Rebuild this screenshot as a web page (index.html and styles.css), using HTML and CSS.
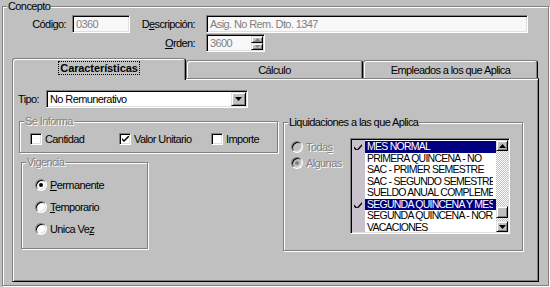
FILE: index.html
```html
<!DOCTYPE html>
<html lang="es">
<head>
    <meta charset="UTF-8">
    <title>Concepto</title>
    <link rel="stylesheet" href="styles.css">
</head>
<body>
    <fieldset class="group concepto">
        <legend>Concepto</legend>

        <div class="header-grid">
            <span class="lbl lbl-codigo">Códi<u>g</u>o:</span>
            <div class="field disabled">0360</div>
            <span class="lbl lbl-desc">D<u>e</u>scripción:</span>
            <div class="field disabled">Asig. No Rem. Dto. 1347</div>
            <span class="lbl lbl-orden"><u>O</u>rden:</span>
            <div class="field disabled spin">
                <span class="spin-value">3600</span>
                <span class="spin-btns">
                    <span class="btn spin-btn"><svg width="5" height="3"><path d="M0 3h5L2.5 0z" fill="#808080"/></svg></span>
                    <span class="btn spin-btn"><svg width="5" height="3"><path d="M0 0h5L2.5 3z" fill="#808080"/></svg></span>
                </span>
            </div>
        </div>

        <div class="tabs">
            <div class="tab-strip">
                <div class="tab tab-active"><span class="focus">Características</span></div>
                <div class="tab tab-calc">Cálculo</div>
                <div class="tab tab-emp">Empleados a los que Aplica</div>
            </div>

            <div class="tab-panel">
                <div class="tipo-row">
                    <span class="lbl-tipo">Tipo:</span>
                    <div class="field combo">
                        <span class="combo-text">No Remunerativo</span>
                        <span class="btn combo-btn"><svg width="7" height="4"><path d="M0 0h7L3.5 4z"/></svg></span>
                    </div>
                </div>

                <div class="panel-body">
                    <div class="left-col">
                        <fieldset class="group se-informa">
                            <legend class="disabled-text">Se Informa</legend>
                            <div class="check-row">
                                <label class="check check-cant"><span class="box"></span><span>Cantidad</span></label>
                                <label class="check check-valor"><span class="box"><svg width="7" height="7"><path d="M0 2l2 2 5-5v2l-5 5-2-2z"/></svg></span><span>Valor Unitario</span></label>
                                <label class="check"><span class="box"></span><span>Importe</span></label>
                            </div>
                        </fieldset>

                        <fieldset class="group vigencia">
                            <legend class="disabled-text">Vigencia</legend>
                            <div class="radio-list">
                                <label class="radio"><span class="dot on"></span><span><u>P</u>ermanente</span></label>
                                <label class="radio"><span class="dot"></span><span><u>T</u>emporario</span></label>
                                <label class="radio"><span class="dot"></span><span>Unica Ve<u>z</u></span></label>
                            </div>
                        </fieldset>
                    </div>

                    <fieldset class="group liquid">
                        <legend>Liquidaciones a las que Aplica</legend>
                        <div class="liquid-body">
                            <div class="liquid-radios">
                                <label class="radio disabled-text"><span class="dot off"></span><span>Toda<u>s</u></span></label>
                                <label class="radio disabled-text"><span class="dot off on"></span><span>Algunas</span></label>
                            </div>

                            <div class="listbox">
                                <div class="list-items">
                                    <div class="item sel"><span class="mark"><svg width="8" height="7"><path d="M0 3.5l3 3 5-5.5v2l-5 5.5-3-3z"/></svg></span><span class="item-text">MES NORMAL</span></div>
                                    <div class="item"><span class="mark"></span><span class="item-text">PRIMERA QUINCENA - NO</span></div>
                                    <div class="item"><span class="mark"></span><span class="item-text">SAC - PRIMER SEMESTRE</span></div>
                                    <div class="item"><span class="mark"></span><span class="item-text">SAC - SEGUNDO SEMESTRE</span></div>
                                    <div class="item"><span class="mark"></span><span class="item-text">SUELDO ANUAL COMPLEMENTARIO</span></div>
                                    <div class="item sel"><span class="mark"><svg width="8" height="7"><path d="M0 3.5l3 3 5-5.5v2l-5 5.5-3-3z"/></svg></span><span class="item-text">SEGUNDA QUINCENA Y MES</span></div>
                                    <div class="item"><span class="mark"></span><span class="item-text">SEGUNDA QUINCENA - NORMAL</span></div>
                                    <div class="item"><span class="mark"></span><span class="item-text">VACACIONES</span></div>
                                </div>
                                <div class="vscroll">
                                    <span class="btn sb-btn"><svg width="7" height="4"><path d="M0 4h7L3.5 0z"/></svg></span>
                                    <span class="sb-track sb-top"></span>
                                    <span class="btn sb-thumb"></span>
                                    <span class="sb-track"></span>
                                    <span class="btn sb-btn"><svg width="7" height="4"><path d="M0 0h7L3.5 4z"/></svg></span>
                                </div>
                            </div>
                        </div>
                    </fieldset>
                </div>
            </div>
        </div>
    </fieldset>
</body>
</html>
```

FILE: styles.css
```css
* {
    box-sizing: border-box;
}

body {
    margin: 0;
    width: 550px;
    height: 287px;
    overflow: hidden;
    background-color: #c0c0c0;
    font-family: "Liberation Sans", Arial, sans-serif;
    font-size: 11px;
    letter-spacing: -0.6px;
    color: #000;
}

u {
    text-decoration-thickness: 1px;
    text-underline-offset: 1px;
}

/* etched group boxes */
.group {
    margin: 0;
    padding: 0;
    min-width: 0;
    border: 1px solid #808080;
    box-shadow: inset 1px 1px 0 #fff, 1px 1px 0 #fff;
}

.group > legend {
    margin-left: 4px;
    padding: 0 1px;
    line-height: 13px;
    background-color: #c0c0c0;
}

.disabled-text {
    color: #808080;
    text-shadow: 1px 1px 0 #fff;
}

/* sunken fields and raised buttons */
.field {
    display: flex;
    align-items: center;
    height: 18px;
    padding: 1px 1px 1px 3px;
    background-color: #fff;
    border: 1px solid;
    border-color: #808080 #fff #fff #808080;
    box-shadow: inset 1px 1px 0 #000, inset -1px -1px 0 #dfdfdf;
    white-space: nowrap;
}

.field.disabled {
    color: #808080;
    background-color: #f8f8f8;
}

.btn {
    display: flex;
    align-items: center;
    justify-content: center;
    background-color: #c0c0c0;
    border: 1px solid;
    border-color: #dfdfdf #000 #000 #dfdfdf;
    box-shadow: inset 1px 1px 0 #fff, inset -1px -1px 0 #808080;
}

/* Concepto header */
.concepto {
    margin-left: 2px;
    width: 547px;
    height: 286px;
}

.concepto > legend {
    margin-left: 4px;
}

.header-grid {
    display: grid;
    grid-template-columns: 69px 58px 76px 322px;
    grid-auto-rows: 18px;
    row-gap: 1px;
    margin-top: 2px;
}

.lbl {
    align-self: center;
    text-align: right;
}

.lbl-codigo {
    padding-right: 6px;
}

.lbl-desc,
.lbl-orden {
    padding-right: 11px;
}

.lbl-orden {
    grid-column: 3;
}

.spin {
    grid-column: 4;
    width: 59px;
    padding-right: 1px;
}

.spin-value {
    flex: 1;
}

.spin-btns {
    display: flex;
    flex-direction: column;
    align-self: stretch;
}

.spin-btn {
    width: 12px;
    flex: 1;
}

/* tabs */
.tabs {
    margin: 6px 0 0 9px;
    width: 527px;
}

.tab-strip {
    display: flex;
    align-items: flex-end;
    height: 20px;
}

.tab {
    display: flex;
    align-items: center;
    justify-content: center;
    height: 18px;
    border: 1px solid;
    border-bottom: none;
    border-color: #808080 #000 #000 #808080;
    border-radius: 3px 3px 0 0;
    box-shadow: inset 1px 1px 0 #fff, inset -1px 0 0 #808080;
    background-color: #c0c0c0;
}

.tab-active {
    position: relative;
    z-index: 1;
    width: 174px;
    height: 22px;
    margin-bottom: -2px;
    padding-bottom: 3px;
    font-weight: bold;
    letter-spacing: -0.1px;
}

.tab-calc {
    width: 177px;
}

.tab-emp {
    width: 175px;
}

.focus {
    padding: 0 1px;
    border: 1px dotted #000;
    line-height: 12px;
}

.tab-panel {
    height: 204px;
    border: 1px solid;
    border-color: #808080 #000 #000 #808080;
    box-shadow: inset 1px 1px 0 #fff, inset -1px -1px 0 #808080;
}

.tipo-row {
    display: flex;
    align-items: center;
    margin: 11px 0 0 5px;
}

.lbl-tipo {
    width: 28px;
}

.combo {
    width: 202px;
}

.combo-text {
    flex: 1;
}

.combo-btn {
    width: 15px;
    height: 14px;
}

/* panel groups */
.panel-body {
    display: flex;
    margin-top: 7px;
}

.left-col {
    display: flex;
    flex-direction: column;
}

.se-informa {
    margin-left: 6px;
    width: 259px;
    height: 38px;
}

.check-row {
    display: flex;
    align-items: center;
    height: 12px;
    margin: 5px 0 0 10px;
}

.check {
    display: flex;
    align-items: center;
    gap: 3px;
}

.check-cant {
    width: 89px;
}

.check-valor {
    width: 92px;
}

.box {
    display: flex;
    align-items: center;
    justify-content: center;
    width: 12px;
    height: 12px;
    background-color: #fff;
    border: 1px solid;
    border-color: #808080 #fff #fff #808080;
    box-shadow: inset 1px 1px 0 #000, inset -1px -1px 0 #dfdfdf;
}

.vigencia {
    margin: 3px 0 0 8px;
    width: 127px;
    height: 93px;
}

.radio-list {
    display: flex;
    flex-direction: column;
    gap: 10px;
    padding: 10px 0 0 13px;
}

.radio {
    display: flex;
    align-items: center;
    gap: 3px;
    height: 12px;
}

.dot {
    display: flex;
    align-items: center;
    justify-content: center;
    width: 12px;
    height: 12px;
    border-radius: 50%;
    background-color: #fff;
    border: 1px solid;
    border-color: #808080 #fff #fff #808080;
    box-shadow: inset 1px 1px 0 #000, inset -1px -1px 0 #dfdfdf;
}

.dot.on::after {
    content: "";
    width: 4px;
    height: 4px;
    border-radius: 50%;
    background-color: #000;
}

.dot.off {
    background-color: #c0c0c0;
}

.dot.off.on::after {
    background-color: #808080;
}

.liquid {
    margin: 1px 0 0 5px;
    width: 240px;
    height: 135px;
}

.liquid > legend {
    margin-left: 4px;
}

.liquid-body {
    display: flex;
}

.liquid-radios {
    display: flex;
    flex-direction: column;
    gap: 4px;
    width: 66px;
    padding: 12px 0 0 7px;
}

.listbox {
    display: flex;
    margin-top: 9px;
    width: 160px;
    height: 96px;
    padding: 1px;
    background-color: #fff;
    border: 1px solid;
    border-color: #808080 #fff #fff #808080;
    box-shadow: inset 1px 1px 0 #000, inset -1px -1px 0 #dfdfdf;
}

.list-items {
    flex: 1;
    min-width: 0;
    padding-top: 1px;
    background: linear-gradient(to right, #c8c2cc 13px, #fff 13px);
    font-size: 10.5px;
    letter-spacing: -0.75px;
}

.item {
    display: flex;
    height: 11.5px;
    line-height: 11.5px;
}

.mark {
    display: flex;
    align-items: center;
    width: 13px;
    padding-left: 2px;
}

.item-text {
    flex: 1;
    min-width: 0;
    padding-left: 2px;
    border-right: 3px solid transparent;
    overflow: hidden;
    white-space: nowrap;
}

.item.sel .item-text {
    background-color: #000080;
    color: #fff;
}

.vscroll {
    display: flex;
    flex-direction: column;
    width: 12px;
}

.sb-btn {
    height: 11px;
}

.sb-thumb {
    height: 12px;
}

.sb-track {
    flex: 1;
    background: repeating-conic-gradient(#fff 0 25%, #c0c0c0 0 50%) 0 0 / 2px 2px;
}

.sb-top {
    flex: 0 0 55px;
}
```
